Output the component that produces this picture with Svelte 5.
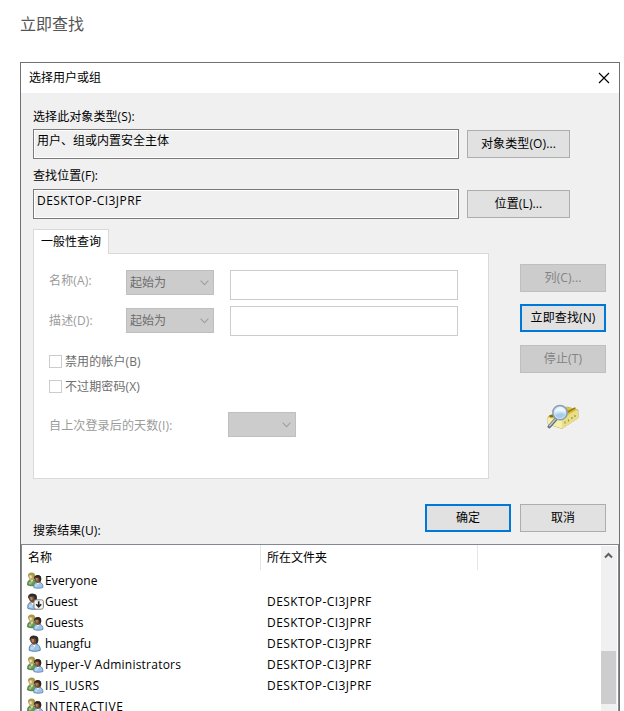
<script>
  const rows = [
    { name: 'Everyone', folder: '', kind: 'group', ls: 0.12 },
    { name: 'Guest', folder: 'DESKTOP-CI3JPRF', kind: 'disabled', ls: 0 },
    { name: 'Guests', folder: 'DESKTOP-CI3JPRF', kind: 'group', ls: 0 },
    { name: 'huangfu', folder: 'DESKTOP-CI3JPRF', kind: 'user', ls: -0.1 },
    { name: 'Hyper-V Administrators', folder: 'DESKTOP-CI3JPRF', kind: 'group', ls: 0.23 },
    { name: 'IIS_IUSRS', folder: 'DESKTOP-CI3JPRF', kind: 'group', ls: 0.35 },
    { name: 'INTERACTIVE', folder: '', kind: 'group', ls: 0.58 }
  ];
  const criteria = ['名称(A):', '描述(D):'];
  const checks = ['禁用的帐户(B)', '不过期密码(X)'];
</script>

{#snippet person(x, y, hair, skin, light, shirt, edge)}
  <g transform="translate({x} {y})">
    <path d="M.7 12.3C.4 9.8 1 8.2 2.6 7.3L6.8 6.9C9.2 8.2 10.1 9.9 9.8 12.3C7 13.4 3 13.3.7 12.3Z" fill={shirt} stroke={edge} stroke-width=".7" />
    <path d="M2.2 9Q1.5 10.2 1.8 11.6L4 11.8L4.8 9.4Z" fill="#fff" opacity=".35" />
    <path d="M3.2 7.1L5 9.9L6.3 7Z" fill="#f4f8fb" />
    <path d="M1.2 2Q3 -.4 7 .8Q8.4 3.4 7.2 6.2Q5.8 8.3 3.8 7.5Q1 5.6 1.2 2Z" fill={skin} />
    <path d="M.9 3.2Q.8.8 2.9.1Q6-.6 7.8 1.2Q8.9 3.5 7.6 6.3L6.3 6.9Q6.8 3.4 5.5 2.3Q3.3 2.4 2.2 2Q1.8 3 1.4 4Z" fill={hair} />
    <path d="M2.6 2.9L4.6 2.9L4.6 5.4L3 5.6Z" fill={light} />
  </g>
{/snippet}

{#snippet chevron()}
  <svg width="9" height="6" viewBox="0 0 9 6"><path d="M.6.7L4.5 4.6L8.4.7" fill="none" stroke="#a0a0a0" stroke-width="1.1" /></svg>
{/snippet}

<main>
  <h1>立即查找</h1>
  <section class="dialog">
    <header>
      <span>选择用户或组</span>
      <svg width="12" height="12" viewBox="0 0 12 12"><path d="M1 1L11 11M11 1L1 11" stroke="#000" stroke-width="1.15" /></svg>
    </header>

    <div class="body">
      <div class="label first">选择此对象类型(S):</div>
      <div class="pick"><div class="field">用户、组或内置安全主体</div><button>对象类型(O)...</button></div>
      <div class="label second">查找位置(F):</div>
      <div class="pick"><div class="field latin">DESKTOP-CI3JPRF</div><button>位置(L)...</button></div>

      <div class="query">
        <div class="tabs">
          <div class="tab">一般性查询</div>
          <div class="panel">
            {#each criteria as c, i}
              <div class="crit" class:lower={i === 1}>
                <span class="dim">{c}</span>
                <div class="select"><span>起始为</span>{@render chevron()}</div>
                <div class="input"></div>
              </div>
            {/each}
            <div class="checks">
              {#each checks as c}
                <div class="check"><i></i><span>{c}</span></div>
              {/each}
            </div>
            <div class="days">
              <span class="dim">自上次登录后的天数(I):</span>
              <div class="select"><span></span>{@render chevron()}</div>
            </div>
          </div>
        </div>
        <div class="side">
          <button class="off">列(C)...</button>
          <button class="primary find">立即查找(N)</button>
          <button class="off stop">停止(T)</button>
          <svg class="search" width="32" height="27" viewBox="0 0 32 27">
            <path d="M1 13L20 3L31 6V14L15 24.5L1 20Z" fill="#e6dc78" stroke="#b7a850" stroke-width=".8" />
            <path d="M1 12.5L19 4L30 5.5L14 15Z" fill="#d9bd3c" />
            <path d="M2 11.5L7 10L9 13L3 13.5Z" fill="#8a6910" />
            <path d="M18 8.5L28 3.2L29 4.2L19 10Z" fill="#9a7714" />
            <path d="M1 13.5L15 17L31 6.5V14L15 24.5L1 20Z" fill="#f5efac" />
            <path d="M15 17L31 6.5V14L15 24.5Z" fill="#e8dd88" />
            <path d="M18 19.5v-2M21.5 17.5v-2M25 15v-2M28 13v-2" stroke="#a0913f" stroke-width="1.2" />
            <path d="M8.6 15.5L2.3 22.6" stroke="#66717b" stroke-width="3.4" stroke-linecap="round" />
            <path d="M8.2 15.5L2.6 21.8" stroke="#c3cbd3" stroke-width="1.3" stroke-linecap="round" />
            <circle cx="13" cy="8.6" r="7.2" fill="#c9e2f5" stroke="#8c9eaf" stroke-width="1.5" />
            <path d="M7.3 8.5Q9 3 14 3Q18 4.2 18.5 8Q12 6.2 7.3 8.5Z" fill="#eef7fe" />
            <path d="M8.2 11Q13 8 18.3 10.5Q16 14.2 12.3 14.1Q9.4 13.6 8.2 11Z" fill="#a5cdec" />
          </svg>
        </div>
      </div>

      <div class="actions">
        <div class="label">搜索结果(U):</div>
        <button class="primary">确定</button>
        <button>取消</button>
      </div>
    </div>

    <div class="list">
      <div class="content">
        <div class="head"><span class="c1">名称</span><span class="c2">所在文件夹</span></div>
        {#each rows as r}
          <div class="row">
            <svg width="17" height="17" viewBox="0 0 17 17">
              {#if r.kind === 'group'}
                {@render person(0, 0.7, '#a49a4c', '#c5a568', '#f4e6b4', '#64a047', '#2e5924')}
                {@render person(6.1, 3.2, '#2c2522', '#7d5137', '#bc8259', '#9cc3ea', '#496f99')}
              {:else}
                <g transform="scale(1.2)">{@render person(r.kind === 'user' ? 1.2 : 0, 0.5, '#302b29', '#704a34', '#b08768', '#9bc2e8', '#456b93')}</g>
              {/if}
              {#if r.kind === 'disabled'}
                <rect x="7" y="6.8" width="9.4" height="9.4" rx="2" fill="#f5f5f5" stroke="#777" stroke-width=".9" />
                <path d="M11.7 8.3v5.5M9.2 11.2L11.7 13.8L14.2 11.2" fill="none" stroke="#222" stroke-width="1.6" />
              {/if}
            </svg>
            <span class="name" style:letter-spacing="{r.ls}px">{r.name}</span><span class="latin">{r.folder}</span>
          </div>
        {/each}
      </div>
      <div class="scroll">
        <svg width="9" height="7" viewBox="0 0 9 7"><path d="M1 5.5L4.5 2L8 5.5" fill="none" stroke="#606060" stroke-width="2" /></svg>
        <div class="thumb"></div>
      </div>
    </div>
  </section>
</main>

<style>
  :global(body) { margin: 0; background: #fff; }
  main { width: 624px; height: 711px; overflow: hidden; box-sizing: border-box; padding: 12px 0 0 20px; font: 12px/18px "Open Sans", "Noto Sans CJK SC", sans-serif; color: #000; }
  main :global(*) { box-sizing: border-box; }
  h1 { margin: 0 0 26px; height: 24px; font-size: 16px; line-height: 24px; font-weight: 400; color: #555; }
  .dialog { width: 600px; height: 649px; border: 1px solid #707070; border-bottom: 0; background: #f0f0f0; }
  header { height: 30px; padding: 0 9px 0 8px; display: flex; align-items: center; justify-content: space-between; background: #fff; }
  .body { height: 451px; padding-left: 12px; }
  .label { height: 18px; white-space: nowrap; letter-spacing: .08px; }
  .first { padding-top: 15px; height: 36px; }
  .second { padding-top: 8px; height: 30px; }
  .pick { display: flex; align-items: center; gap: 8px; height: 30px; }
  .field { width: 426px; height: 30px; border: 1px solid #7a7a7a; box-shadow: inset 0 0 0 1px #fff; padding: 2px 3px; }
  .latin { letter-spacing: .43px; }
  button { display: flex; align-items: center; justify-content: center; width: 103px; height: 28px; padding: 0; border: 1px solid #adadad; background: #e1e1e1; font: inherit; color: #000; white-space: nowrap; letter-spacing: .12px; }
  .query { display: flex; padding-top: 10px; height: 260px; }
  .tabs { width: 456px; }
  .tab { position: relative; width: 76px; height: 25px; margin-bottom: -1px; border: 1px solid #d9d9d9; border-bottom: 0; background: #fff; padding: 3px 0 0 7px; white-space: nowrap; }
  .panel { height: 226px; border: 1px solid #d9d9d9; background: #fff; padding: 16px 0 0 15px; }
  .crit { display: flex; height: 36px; }
  .dim { color: #9b9b9b; white-space: nowrap; letter-spacing: .15px; }
  .crit .dim { width: 77px; padding: 2px 0 0; }
  .select { display: flex; align-items: center; justify-content: space-between; width: 88px; height: 25px; border: 1px solid #bfbfbf; background: #ccc; color: #6d6d6d; padding: 0 4px 0 3px; }
  .lower .select { margin-top: 2px; }
  .lower .dim { padding-top: 6px; }
  .input { margin-left: 16px; width: 228px; height: 30px; border: 1px solid #ccc; background: #fff; }
  .checks { padding-top: 10px; }
  .check { display: flex; align-items: center; gap: 3px; height: 18px; margin-bottom: 7px; color: #6d6d6d; }
  .check i { width: 13px; height: 13px; border: 1px solid #ccc; }
  .check span { padding-top: 2px; letter-spacing: .1px; }
  .days { display: flex; padding-top: 10px; }
  .days .dim { width: 179px; padding-top: 5px; }
  .days .select { width: 68px; }
  .side { padding: 35px 0 0 31px; }
  .side button, .actions button { width: 86px; }
  button.off { background: #ccc; border-color: #bfbfbf; color: #838383; }
  button.primary { border: 2px solid #0078d7; }
  .find { margin: 12px 0 13px; }
  .search { display: block; margin: 31px 0 0 27px; }
  .actions { display: flex; height: 28px; margin-top: 25px; gap: 9px; }
  .actions .label { width: 383px; padding-top: 18px; }
  .list { display: flex; height: 167px; border: 1px solid #828790; border-width: 1px 1px 0; background: #fff; overflow: hidden; }
  .content { width: 579px; }
  .head { display: flex; height: 25px; }
  .head span { padding: 4px 0 0 6px; height: 25px; border-right: 1px solid #e5e5e5; }
  .c1 { width: 239px; }
  .c2 { width: 217px; }
  .row { display: flex; align-items: center; height: 21px; padding-left: 5px; gap: 1px; white-space: nowrap; }
  .row:last-child { height: 20px; padding-top: 1px; }
  .name { width: 221px; }
  .scroll { width: 16px; margin-top: 1px; background: #f0f0f0; }
  .scroll svg { display: block; margin: 6px 0 0 3px; }
  .thumb { margin-top: 92px; height: 53px; width: 15px; background: #cdcdcd; }
</style>
